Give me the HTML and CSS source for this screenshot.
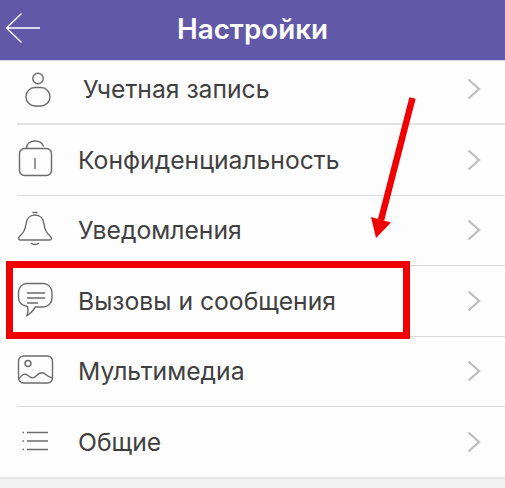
FILE: index.html
```html
<!DOCTYPE html>
<html lang="ru">
<head>
    <meta charset="UTF-8">
    <meta name="viewport" content="width=device-width, initial-scale=1.0">
    <title>Настройки</title>
    <link rel="stylesheet" href="styles.css">
</head>

<body>
  <div id="app-wrapper">
        <header class="top-bar">
            <svg class="back-icon" width="36" height="32" viewBox="0 0 36 32">
                <path d="M35 16H1.500M16.500 1.500L1.500 16L16.500 30.500" fill="none" stroke="#fff" stroke-width="1.3"/>
            </svg>
            <h1>Настройки</h1>
        </header>

        <ul class="settings-list">
            <li class="first">
                <span class="icon">
                    <svg width="40" height="40" viewBox="0 0 40 40">
                        <circle cx="21" cy="6.500" r="5.200"/>
                        <rect x="9" y="15.500" width="24" height="18.500" rx="9"/>
                    </svg>
                </span>
                <span class="label account">Учетная запись</span>
                <svg class="chevron" width="14" height="22" viewBox="0 0 14 22"><path d="M1.500 1.500L12 11L1.500 20.500"/></svg>
            </li>
            <li>
                <span class="icon">
                    <svg width="40" height="40" viewBox="0 0 40 40">
                        <rect x="2.500" y="8.500" width="32" height="27" rx="5"/>
                        <path d="M9.500 8C9.500 3.500 13.500 1 18 1S25.500 3 26.500 6.500"/>
                        <path d="M18 18V29"/>
                    </svg>
                </span>
                <span class="label">Конфиденциальность</span>
                <svg class="chevron" width="14" height="22" viewBox="0 0 14 22"><path d="M1.500 1.500L12 11L1.500 20.500"/></svg>
            </li>
            <li>
                <span class="icon">
                    <svg width="40" height="40" viewBox="0 0 40 40">
                        <path d="M2 29.500C1 28.500 1.500 27.500 2.500 26.500C6.500 23 8.500 19 9 14C9.500 8.500 13 5 18 5S26.500 8.500 27 14C27.500 19 29.500 23 33.500 26.500C34.500 27.500 35 28.500 34 29.500C33.500 30 33 30 32.500 30H3.500C3 30 2.500 30 2 29.500Z"/>
                        <path d="M15.500 2.500H20.500M14 33C16 35 20 35 22 33"/>
                    </svg>
                </span>
                <span class="label">Уведомления</span>
                <svg class="chevron" width="14" height="22" viewBox="0 0 14 22"><path d="M1.500 1.500L12 11L1.500 20.500"/></svg>
            </li>
            <li>
                <span class="icon">
                    <svg width="40" height="40" viewBox="0 0 40 40">
                        <path d="M10 2.500H26C31 2.500 35 6.500 35 11.500V17C35 22 31 26 26 26H18.500C16 29.500 13.500 33 10 34.500C11 32 11.500 29 10.500 25.500C5.500 24.500 1.500 21.500 1.500 16.500V11.500C1.500 6.500 5 2.500 10 2.500Z"/>
                        <path d="M10 12H28M10 17H28M10 22H21"/>
                    </svg>
                </span>
                <span class="label">Вызовы и сообщения</span>
                <svg class="chevron" width="14" height="22" viewBox="0 0 14 22"><path d="M1.500 1.500L12 11L1.500 20.500"/></svg>
            </li>
            <li>
                <span class="icon">
                    <svg width="40" height="40" viewBox="0 0 40 40">
                        <rect x="1.500" y="5" width="34" height="27" rx="5"/>
                        <circle cx="11" cy="12.500" r="3"/>
                        <path d="M2 28C5 23 8 22 11 24.500S16 28 19 25S25 20.500 28 23S32 26 35.500 27"/>
                    </svg>
                </span>
                <span class="label">Мультимедиа</span>
                <svg class="chevron" width="14" height="22" viewBox="0 0 14 22"><path d="M1.500 1.500L12 11L1.500 20.500"/></svg>
            </li>
            <li>
                <span class="icon">
                    <svg width="40" height="40" viewBox="0 0 40 40">
                        <path d="M10 10.500H31M10 19H31M10 27.500H31"/>
                        <path d="M5.500 10.500H7M5.500 19H7M5.500 27.500H7"/>
                    </svg>
                </span>
                <span class="label">Общие</span>
                <svg class="chevron" width="14" height="22" viewBox="0 0 14 22"><path d="M1.500 1.500L12 11L1.500 20.500"/></svg>
            </li>
        </ul>
        <div class="bottom-strip"></div>

        <!-- annotations on top of the screenshot -->
        <div class="highlight-box"></div>
        <svg class="arrow" width="505" height="488" viewBox="0 0 505 488">
            <path d="M412.500 98L381 220" stroke="#f00000" stroke-width="6.500" fill="none"/>
            <path d="M371 217L391 222.500L376 238Z" fill="#f00000"/>
        </svg>
    </div>
</body>

</html>
```

FILE: styles.css
```css
/* General styles */
body {
    font-family: Inter, Roboto, sans-serif;
    margin: 0;
    padding: 0;
    background-color: #fdfdfd;
    color: #404040;
}

#app-wrapper {
    position: relative;
    width: 505px;
    height: 488px;
    overflow: hidden;
}

/* Top bar */
.top-bar {
    height: 61px;
    background-color: #6159a8;
    display: flex;
    align-items: center;
    justify-content: center;
    border-bottom: 1px solid #d8d6e8;
    box-sizing: border-box;
    position: relative;
}

.top-bar h1 {
    margin: 0 0 2px;
    font-size: 27.8px;
    font-weight: 600;
    color: #fff;
}

.back-icon {
    position: absolute;
    left: 5px;
    top: 12px;
}

/* Settings list */
.settings-list {
    list-style-type: none;
    margin: 0;
    padding: 0;
}

.settings-list li {
    height: 70.4px;
    box-sizing: border-box;
    margin-left: 17px;
    padding-right: 24px;
    display: flex;
    align-items: center;
    border-bottom: 1px solid #d9d9d9;
}

.settings-list li.first {
    height: 64.4px;
    padding-bottom: 6px;
    border-bottom-width: 2px;
    border-color: #e2e2e2;
}

.settings-list li:last-child {
    border-bottom: none;
}

.icon {
    width: 40px;
    height: 40px;
    flex: none;
    margin-right: 21px;
}

.first .icon {
    margin-top: 6px;
}

.icon svg,
.chevron {
    display: block;
    fill: none;
    stroke: #6b6b6b;
    stroke-width: 1.4;
}

.label {
    flex: 1;
    font-size: 24.7px;
    line-height: 30px;
}

.label.account {
    padding-left: 5px;
}

.chevron {
    flex: none;
    stroke: #bdbdbd;
    stroke-width: 2.2;
}

.bottom-strip {
    height: 11px;
    background-color: #f2f2f2;
    border-top: 2px solid #e6e6e6;
    box-sizing: border-box;
}

/* Annotations */
.highlight-box {
    position: absolute;
    left: 6px;
    top: 261px;
    width: 404px;
    height: 78px;
    box-sizing: border-box;
    border: 7px solid #f00000;
}

.arrow {
    position: absolute;
    left: 0;
    top: 0;
}
```
